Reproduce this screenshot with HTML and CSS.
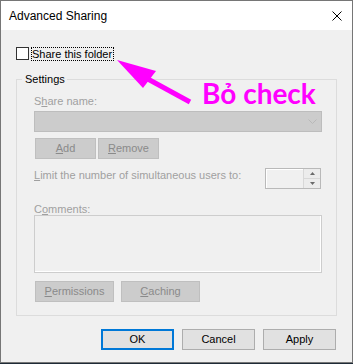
FILE: index.html
```
<!DOCTYPE html>
<html>
<head>
<meta charset="utf-8">
<link rel="stylesheet" href="styles.css">
</head>
<body>
<div class="window">
  <div class="titlebar">
    <span class="title">Advanced Sharing</span>
    <svg class="close" width="10" height="10" viewBox="0 0 10 10"><path d="M0.5 0.5L9.5 9.5M9.5 0.5L0.5 9.5" stroke="#000" stroke-width="1" fill="none"/></svg>
  </div>
  <div class="content">
    <div class="share-row">
      <span class="checkbox"></span>
      <span class="share-label"><u>S</u>hare this folder</span>
    </div>
    <fieldset class="settings">
      <legend>Settings</legend>
      <div class="label">S<u>h</u>are name:</div>
      <div class="dropdown">
        <svg width="9" height="5" viewBox="0 0 9 5"><path d="M0.5 0.5L4.5 4.5L8.5 0.5" stroke="#b8b8b8" fill="none"/></svg>
      </div>
      <div class="btn-row">
        <span class="btn disabled small"><u>A</u>dd</span>
        <span class="btn disabled small"><u>R</u>emove</span>
      </div>
      <div class="limit-row">
        <span class="label limit"><u>L</u>imit the number of simultaneous users to:</span>
        <span class="spinbox">
          <span class="spin-field"></span>
          <span class="spin-btns">
            <span class="spin"><svg width="5" height="3" viewBox="0 0 5 3"><path d="M0 3L2.5 0L5 3Z" fill="#6a6a6a"/></svg></span>
            <span class="spin"><svg width="5" height="3" viewBox="0 0 5 3"><path d="M0 0L2.5 3L5 0Z" fill="#6a6a6a"/></svg></span>
          </span>
        </span>
      </div>
      <div class="label comments">C<u>o</u>mments:</div>
      <div class="textarea"></div>
      <div class="btn-row btn-row2">
        <span class="btn disabled wide"><u>P</u>ermissions</span>
        <span class="btn disabled wide"><u>C</u>aching</span>
      </div>
    </fieldset>
    <div class="footer">
      <span class="btn default">OK</span>
      <span class="btn">Cancel</span>
      <span class="btn">Apply</span>
    </div>
  </div>
  <svg class="arrow" width="353" height="120" viewBox="0 0 353 120">
    <path d="M117 60L156 71L143 88Z" fill="#ff00ff"/>
    <path d="M146 78L190 102" stroke="#ff00ff" stroke-width="5" fill="none"/>
  </svg>
  <div class="note">Bỏ check</div>
</div>
</body>
</html>
```
FILE: styles.css
```
* { box-sizing: border-box; }
html, body { margin: 0; padding: 0; }
body {
  background: #1e2a36;
  width: 353px;
  height: 364px;
  overflow: hidden;
  font-family: "Liberation Sans", Arial, sans-serif;
  font-size: 11px;
  color: #000;
}
.window {
  position: relative;
  width: 353px;
  height: 363px;
  border: 1px solid #767676;
  background: #f0f0f0;
  display: flex;
  flex-direction: column;
}
.titlebar {
  height: 29px;
  background: #fff;
  display: flex;
  align-items: center;
  justify-content: space-between;
  padding: 0 10px 0 8px;
}
.title {
  font-size: 12px;
  line-height: 14px;
}
.close { display: block; }
.content {
  flex: 1;
  padding: 17px 15px 0 15px;
  display: flex;
  flex-direction: column;
}
.share-row {
  display: flex;
  align-items: flex-start;
  height: 14px;
}
.checkbox {
  width: 13px;
  height: 13px;
  border: 1px solid #333;
  background: #fff;
  margin-right: 1px;
}
.share-label {
  margin-left: 1px;
  border: 1px dotted #000;
  line-height: 12px;
  padding: 0 1px 0 0;
}
u { text-decoration: underline; text-underline-offset: 1px; }
.share-label u { text-decoration: none; }
.settings {
  margin: 12px 0 0 0;
  width: 321px;
  border: 1px solid #dcdcdc;
  padding: 9px 14px 13px 17px;
  min-width: 0;
}
.settings legend {
  padding: 0 2px 0 3px;
  margin-left: -12px;
  line-height: 13px;
  color: #000;
}
.label {
  color: #a0a0a0;
  line-height: 13px;
}
.dropdown {
  margin-top: 3px;
  height: 21px;
  background: #cccccc;
  border: 1px solid #bdbdbd;
  display: flex;
  align-items: center;
  justify-content: flex-end;
  padding-right: 4px;
}
.dropdown svg { display: block; }
.btn-row {
  display: flex;
  gap: 2px;
  margin-top: 6px;
  margin-left: 1px;
}
.btn {
  display: flex;
  align-items: center;
  justify-content: center;
  height: 21px;
  background: #e1e1e1;
  border: 1px solid #adadad;
  line-height: 13px;
  width: 73px;
}
.btn.disabled {
  background: #cccccc;
  border-color: #bfbfbf;
  color: #8a8a8a;
}
.btn.small { width: 61px; }
.btn.wide { width: 79px; }
.btn-row2 { gap: 7px; margin-top: 8px; }
.btn.default { border: 2px solid #0078d7; }
.limit-row {
  margin-top: 9px;
  display: flex;
  justify-content: space-between;
  align-items: flex-start;
  padding-right: 1px;
}
.limit { margin-top: 1px; }
.spinbox {
  width: 56px;
  height: 21px;
  border: 1px solid #b9b9b9;
  background: #f0f0f0;
  display: flex;
}
.spin-field {
  flex: 1;
  box-shadow: inset 1px 1px 0 #fff;
}
.spin-btns {
  width: 17px;
  display: flex;
  flex-direction: column;
  border-left: 1px solid #d8d8d8;
}
.spin {
  flex: 1;
  display: flex;
  align-items: center;
  justify-content: center;
  background: #ececec;
}
.spin + .spin { border-top: 1px solid #d8d8d8; }
.spin svg { display: block; }
.comments {
  margin-top: 14px;
  line-height: 12px;
}
.textarea {
  height: 58px;
  border: 1px solid #cdcdcd;
  background: #f0f0f0;
  box-shadow: inset -1px -1px 0 #fff;
}
.footer {
  margin-top: 13px;
  display: flex;
  justify-content: flex-end;
  gap: 8px;
  padding-right: 1px;
}
.arrow {
  position: absolute;
  left: -1px;
  top: -1px;
  pointer-events: none;
}
.note {
  position: absolute;
  left: 201px;
  top: 78px;
  font-family: Lato, "Open Sans", sans-serif;
  font-weight: bold;
  font-size: 28px;
  line-height: 28px;
  color: #ff00ff;
}
```
